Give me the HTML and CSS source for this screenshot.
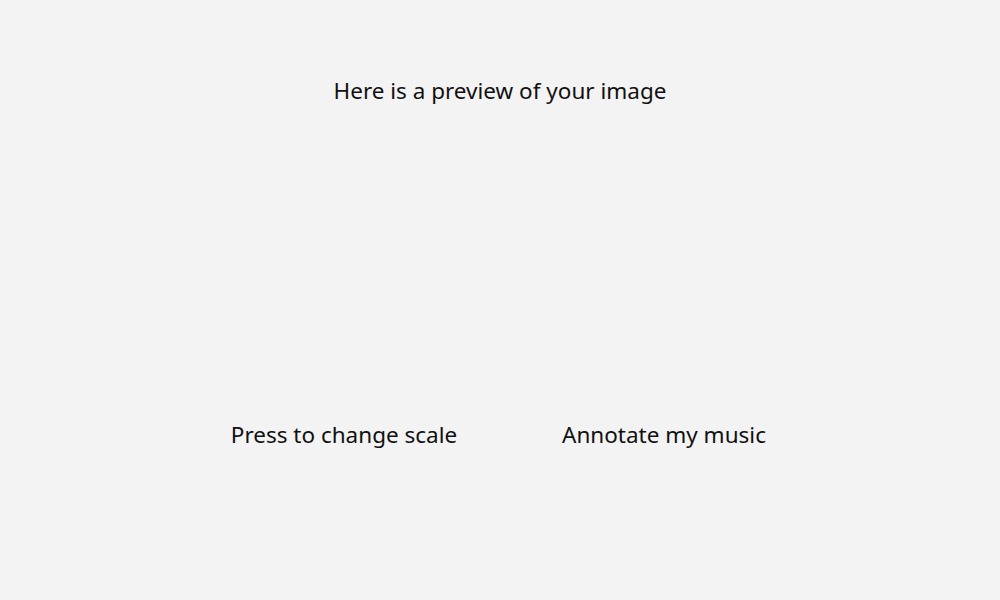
FILE: index.html
```html
<!DOCTYPE html>
<html>
<head>
<meta charset="utf-8">
<link rel="stylesheet" href="styles.css">
</head>
<body>
<main class="page">
  <h1 class="title">Here is a preview of your image</h1>
  <div class="preview"></div>
  <div class="actions">
    <button class="action">Press to change scale</button>
    <button class="action">Annotate my music</button>
  </div>
</main>
</body>
</html>
```
FILE: styles.css
```css
html, body {
  margin: 0;
  padding: 0;
  background: #f3f3f3;
}
body {
  font-family: "Noto Sans", sans-serif;
  color: #111;
  width: 1000px;
  height: 600px;
  overflow: hidden;
}
.page {
  display: flex;
  flex-direction: column;
  align-items: center;
}
.title {
  margin: 77px 0 0;
  font-size: 22.5px;
  font-weight: 400;
  line-height: 28px;
}
.preview {
  height: 316px;
}
.actions {
  display: flex;
  justify-content: center;
  margin-left: 8px;
}
.action {
  width: 320px;
  background: none;
  border: none;
  padding: 0;
  font: inherit;
  font-size: 22.5px;
  line-height: 28px;
  color: #111;
}
```
